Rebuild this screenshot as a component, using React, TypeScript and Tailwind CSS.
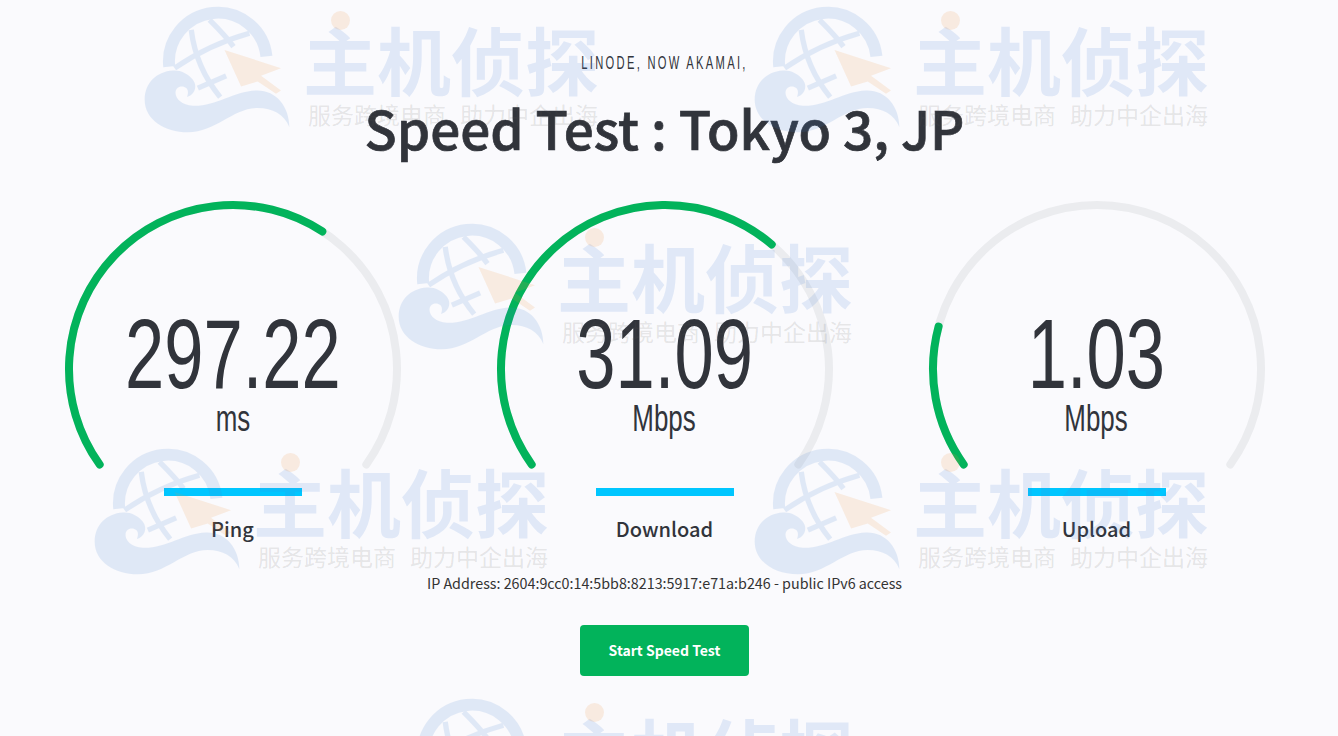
import React from 'react'

const CJK = { fontFamily: '"Noto Sans CJK SC", "Noto Sans", sans-serif' }
const NARROW = { fontFamily: '"Liberation Sans", sans-serif' }

const START = -125.6
const END = 125.6

const point = (deg: number, r: number) => {
  const rad = (deg * Math.PI) / 180
  return `${(172 + r * Math.sin(rad)).toFixed(2)} ${(172 - r * Math.cos(rad)).toFixed(2)}`
}

const arc = (from: number, to: number, r: number) =>
  `M ${point(from, r)} A ${r} ${r} 0 ${to - from > 180 ? 1 : 0} 1 ${point(to, r)}`

interface GaugeProps {
  value: string
  unit: string
  label: string
  end: number
}

const Gauge: React.FC<GaugeProps> = ({ value, unit, label, end }) => (
  <div className="flex flex-col items-center">
    <div className="grid w-[344px] h-[344px]">
      <svg viewBox="0 0 344 344" className="[grid-area:1/1] w-full h-full" fill="none" strokeLinecap="round">
        <path d={arc(START, END, 164)} stroke="#ebecef" strokeWidth="8" />
        <path d={arc(START, end, 164)} stroke="#02b35b" strokeWidth="8" />
      </svg>
      <div className="[grid-area:1/1] flex flex-col items-center pt-[92px] text-[#31343b]">
        <div className="text-[98px] leading-[130px] scale-x-[0.72]" style={NARROW}>{value}</div>
        <div className="text-[36px] leading-[40px] mt-[-20px] scale-x-[0.72]" style={NARROW}>{unit}</div>
      </div>
    </div>
    <div className="w-[138px] h-2 bg-[#00c6ff] mt-[-53px]" />
    <div className="text-[20px] leading-[30px] font-medium text-[#31343b] mt-[18px]">{label}</div>
  </div>
)

const Watermark: React.FC<{ className: string }> = ({ className }) => (
  <div className={`absolute flex w-[460px] h-[130px] ${className}`}>
    <svg viewBox="40 15 445 385" className="w-[148px] h-[128px] shrink-0 -ml-[2px]" fill="none">
      <g opacity="0.14">
        <path
          d="M130 212C80 215 45 250 45 300C45 360 105 398 175 398C260 398 310 325 385 325C430 325 465 345 480 382C480 320 440 270 380 272C310 275 260 320 190 318C155 316 135 295 138 275C140 260 160 255 170 265C178 272 175 285 172 292C195 285 205 260 190 240C175 220 150 210 130 212Z"
          fill="rgb(70,130,210)"
        />
        <g stroke="rgb(70,130,210)">
          <path d="M118.8 200.4A147 147 0 0 1 411.2 169.6" strokeWidth="36" />
          <path d="M135 205C200 160 270 125 360 100" strokeWidth="16" />
          <path d="M185 90C195 170 225 235 272 292" strokeWidth="16" />
          <path d="M240 60C265 85 290 110 312 140" strokeWidth="16" />
          <path d="M205 265L290 228" strokeWidth="16" />
        </g>
      </g>
      <path d="M285 150L455 205L395 228L455 272L440 282L385 245L335 260Z" fill="rgb(240,150,60)" fillOpacity="0.14" />
    </svg>
    <div className="relative ml-[17px] w-[290px]" style={CJK}>
      <span className="absolute left-[23px] top-[6px] w-[19px] h-[19px] rounded-full bg-[rgb(240,150,60)]/15" />
      <div className="text-[74px] leading-[72px] mt-[17px] -ml-[5px] text-[rgb(70,130,210)]/14 font-bold whitespace-nowrap">主机侦探</div>
      <div className="flex justify-between text-[23px] leading-[30px] mt-[5px] text-[rgb(90,90,90)]/15 whitespace-nowrap">
        <span>服务跨境电商</span>
        <span>助力中企出海</span>
      </div>
    </div>
  </div>
)

export default function App() {
  return (
    <div className="relative h-[736px] overflow-hidden bg-[#fafafd] pr-[9px]" style={CJK}>
      <div className="pt-[52px] text-center">
        <div className="text-[18px] leading-[22px] tracking-[3.7px] text-[#31343b] scale-x-[0.62]" style={NARROW}>
          LINODE, NOW AKAMAI,
        </div>
        <h1 className="text-[53px] leading-[62px] font-medium [-webkit-text-stroke:0.7px_#31343b] text-[#31343b] mt-[22px]">
          Speed Test : Tokyo 3, JP
        </h1>
      </div>

      <div className="w-[1296px] mx-auto grid grid-cols-3 mt-[39px]">
        <Gauge value="297.22" unit="ms" label="Ping" end={33} />
        <Gauge value="31.09" unit="Mbps" label="Download" end={40.6} />
        <Gauge value="1.03" unit="Mbps" label="Upload" end={-75} />
      </div>

      <p className="text-center text-[14.3px] leading-[20px] text-[#333333] mt-[29px]">
        IP Address: 2604:9cc0:14:5bb8:8213:5917:e71a:b246 - public IPv6 access
      </p>

      <div className="flex justify-center mt-[32px]">
        <button className="w-[169px] h-[51px] rounded-[4px] bg-[#02b35b] text-white text-[14px] font-bold">
          Start Speed Test
        </button>
      </div>

      <div className="absolute inset-0 pointer-events-none">
        <Watermark className="left-[145px] top-[5px]" />
        <Watermark className="left-[755px] top-[5px]" />
        <Watermark className="left-[399px] top-[222px]" />
        <Watermark className="left-[95px] top-[447px]" />
        <Watermark className="left-[755px] top-[447px]" />
        <Watermark className="left-[399px] top-[697px]" />
      </div>
    </div>
  )
}
